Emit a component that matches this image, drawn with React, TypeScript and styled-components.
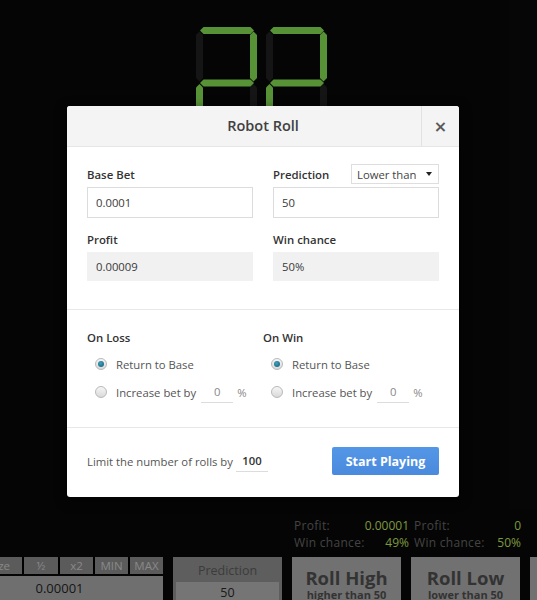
import React from "react";
import styled, { createGlobalStyle } from "styled-components";

const GlobalStyle = createGlobalStyle`
  html, body { margin: 0; padding: 0; background: #060606; }
  body { font-family: "Open Sans", "Noto Sans", Arial, sans-serif; }
  * { box-sizing: border-box; }
`;

const Page = styled.div`
  position: relative;
  width: 537px;
  height: 600px;
  overflow: hidden;
  background: #080808;
`;

const Scene = styled.div`
  display: flex;
  flex-direction: column;
  height: 100%;
`;

const DigitArea = styled.div`
  padding: 21px 0 0 193px;
  height: 140px;
`;

const Spacer = styled.div`
  flex: 1;
`;

const StatsRow = styled.div`
  display: flex;
  gap: 13px;
  padding-left: 294px;
  margin-bottom: 6px;
`;

const StatBlock = styled.div`
  width: 107px;
  flex-shrink: 0;
  display: grid;
  grid-template-columns: auto auto;
  justify-content: space-between;
  font-size: 12px;
  letter-spacing: 0.3px;
  line-height: 17px;
  white-space: nowrap;
`;

const StatLabel = styled.span`
  color: #616161;
`;

const StatValue = styled.span`
  color: #b3d75c;
  text-align: right;
  letter-spacing: 0;
`;

const BottomBar = styled.div`
  display: flex;
  gap: 10px;
  height: 43px;
  margin-left: -44px;
`;

const BetGroup = styled.div`
  width: 207px;
  flex-shrink: 0;
  display: flex;
  flex-direction: column;
  gap: 2px;
`;

const BtnRow = styled.div`
  display: flex;
  gap: 2px;
  height: 23px;
  background: #000;
`;

const GroupBtn = styled.div<{ $w: number; $right?: boolean }>`
  width: ${(p) => p.$w}px;
  flex-shrink: 0;
  background: #838383;
  color: #c3c3c3;
  font-size: 11.5px;
  display: flex;
  align-items: center;
  justify-content: ${(p) => (p.$right ? "flex-end" : "center")};
  padding-right: ${(p) => (p.$right ? "12px" : "0")};
`;

const BetInput = styled.div`
  flex: 1;
  background: #a0a0a0;
  color: #222;
  font-size: 13px;
  text-align: center;
  line-height: 24px;
`;

const PredBox = styled.div`
  width: 109px;
  flex-shrink: 0;
  background: #878787;
  display: flex;
  flex-direction: column;
  align-items: center;
  padding: 0 3px;
`;

const PredTitle = styled.div`
  color: #565656;
  font-size: 12.5px;
  height: 25px;
  line-height: 27px;
`;

const PredInput = styled.div`
  align-self: stretch;
  flex: 1;
  background: #a8a8a8;
  color: #252525;
  font-size: 12.5px;
  text-align: center;
  line-height: 22px;
`;

const RollBtn = styled.div`
  width: 109px;
  flex-shrink: 0;
  background: #a3a3a3;
  color: #4a4a4a;
  display: flex;
  flex-direction: column;
  align-items: center;
  padding-top: 10px;
  overflow: hidden;
`;

const RollTitle = styled.div`
  font-size: 18.5px;
  font-weight: 700;
  line-height: 21px;
`;

const RollSub = styled.div`
  font-size: 11px;
  font-weight: 700;
  line-height: 14px;
`;

const Backdrop = styled.div`
  position: absolute;
  inset: 0;
  background: rgba(0, 0, 0, 0.3);
  padding: 106px 0 0 67px;
`;

const Modal = styled.div`
  width: 392px;
  background: #fff;
  border-radius: 3px;
  box-shadow: 0 3px 12px rgba(0, 0, 0, 0.6);
  overflow: hidden;
`;

const Header = styled.div`
  display: flex;
  height: 41px;
  background: #f4f4f4;
  border-bottom: 1px solid #e6e6e6;
`;

const Title = styled.div`
  flex: 1;
  text-align: center;
  padding-left: 38px;
  font-size: 14.5px;
  font-weight: 600;
  color: #404040;
  line-height: 40px;
`;

const Close = styled.div`
  width: 38px;
  border-left: 1px solid #e2e2e2;
  display: flex;
  align-items: center;
  justify-content: center;
  color: #5a5a5a;
  font-size: 16px;
  font-weight: 700;
  font-family: "DejaVu Sans", sans-serif;
`;

const Section = styled.div<{ $pt: number; $pb: number; $border?: boolean }>`
  padding: ${(p) => p.$pt}px 20px ${(p) => p.$pb}px;
  border-bottom: ${(p) => (p.$border ? "1px solid #e8e8e8" : "none")};
`;

const Grid = styled.div`
  display: grid;
  grid-template-columns: 166px 166px;
  column-gap: 20px;
  row-gap: 11px;
`;

const Field = styled.div`
  display: flex;
  flex-direction: column;
  gap: 3px;
`;

const LabelRow = styled.div`
  display: flex;
  align-items: center;
  justify-content: space-between;
  height: 20px;
`;

const Label = styled.div`
  font-size: 11.4px;
  font-weight: 600;
  color: #333;
`;

const TextInput = styled.div<{ $readonly?: boolean }>`
  height: ${(p) => (p.$readonly ? "29px" : "31px")};
  border: 1px solid ${(p) => (p.$readonly ? "#f1f1f1" : "#dcdcdc")};
  background: ${(p) => (p.$readonly ? "#f1f1f1" : "#fff")};
  font-size: 11.3px;
  color: #3a3a3a;
  padding-left: 8px;
  display: flex;
  align-items: center;
`;

const Select = styled.div`
  width: 88px;
  height: 20px;
  border: 1px solid #dedede;
  font-size: 11.3px;
  color: #444;
  display: flex;
  align-items: center;
  justify-content: space-between;
  padding: 0 6px 0 5px;
`;

const Caret = styled.span`
  width: 0;
  height: 0;
  border-left: 3.5px solid transparent;
  border-right: 3.5px solid transparent;
  border-top: 4px solid #222;
`;

const Columns = styled.div`
  display: grid;
  grid-template-columns: 176px 176px;
`;

const Group = styled.div`
  display: flex;
  flex-direction: column;
`;

const GroupTitle = styled.div`
  font-size: 11.4px;
  font-weight: 600;
  color: #333;
  height: 16px;
  line-height: 16px;
  margin-bottom: 8px;
`;

const RadioRow = styled.label`
  display: flex;
  align-items: center;
  height: 20px;
  padding-left: 8px;
  font-size: 11.3px;
  color: #555;
  & + & {
    margin-top: 8px;
  }
`;

const Radio = styled.input`
  appearance: none;
  width: 12px;
  height: 12px;
  margin: 0 9px 0 0;
  border-radius: 50%;
  border: 1px solid #b9b9b9;
  background: linear-gradient(#f6f6f6, #d9d9d9);
  display: grid;
  place-items: center;
  &:checked::after {
    content: "";
    width: 6px;
    height: 6px;
    border-radius: 50%;
    background: radial-gradient(circle at 40% 35%, #3fa0c0, #135b73);
  }
`;

const Underline = styled.span<{ $w: number; $bold?: boolean }>`
  display: inline-block;
  width: ${(p) => p.$w}px;
  border-bottom: 1px solid #dcdcdc;
  text-align: center;
  line-height: 20px;
  color: ${(p) => (p.$bold ? "#333" : "#888")};
  font-weight: ${(p) => (p.$bold ? 600 : 400)};
`;

const Pct = styled.span`
  color: #888;
  margin-left: 4px;
`;

const IncLabel = styled.span`
  margin-right: 5px;
`;

const Footer = styled.div`
  display: flex;
  align-items: center;
  justify-content: space-between;
  padding: 19px 20px 22px;
`;

const LimitText = styled.div`
  font-size: 11.3px;
  color: #555;
  display: flex;
  align-items: center;
  gap: 3px;
`;

const StartButton = styled.button`
  width: 107px;
  height: 28px;
  border: none;
  border-radius: 2px;
  background: linear-gradient(#5496e6, #4a8ade);
  color: #fff;
  font-family: inherit;
  font-size: 12.5px;
  font-weight: 700;
  padding: 0;
`;

type Seg = "a" | "b" | "c" | "d" | "e" | "f" | "g";

const segPoints = (s: Seg, ox: number): string => {
  const h = (x1: number, x2: number, yc: number) =>
    `${ox + x1},${yc} ${ox + x1 + 3.5},${yc - 3.5} ${ox + x2 - 3.5},${yc - 3.5} ${ox + x2},${yc} ${ox + x2 - 3.5},${yc + 3.5} ${ox + x1 + 3.5},${yc + 3.5}`;
  const v = (xc: number, y1: number, y2: number) =>
    `${ox + xc},${y1} ${ox + xc + 3.5},${y1 + 3.5} ${ox + xc + 3.5},${y2 - 3.5} ${ox + xc},${y2} ${ox + xc - 3.5},${y2 - 3.5} ${ox + xc - 3.5},${y1 + 3.5}`;
  switch (s) {
    case "a":
      return h(4, 58, 9.5);
    case "b":
      return v(57.5, 10.5, 60.5);
    case "c":
      return v(57.5, 63, 113);
    case "d":
      return h(4, 58, 114.5);
    case "e":
      return v(3.5, 63, 113);
    case "f":
      return v(3.5, 10.5, 60.5);
    default:
      return h(4, 58, 62);
  }
};

const TWO: Seg[] = ["a", "b", "g", "e", "d"];
const ALL: Seg[] = ["a", "b", "c", "d", "e", "f", "g"];

const Digit: React.FC<{ ox: number; lit: Seg[] }> = ({ ox, lit }) => (
  <g>
    {ALL.map((s) => (
      <polygon
        key={s}
        points={segPoints(s, ox)}
        fill={lit.includes(s) ? "#7fd250" : "#1f1f1f"}
      />
    ))}
  </g>
);

export default function App() {
  return (
    <>
      <GlobalStyle />
      <Page>
        <Scene>
          <DigitArea>
            <svg width="140" height="124" viewBox="0 0 140 124">
              <Digit ox={3} lit={TWO} />
              <Digit ox={73} lit={TWO} />
            </svg>
          </DigitArea>
          <Spacer />
          <StatsRow>
            <StatBlock>
              <StatLabel>Profit:</StatLabel>
              <StatValue>0.00001</StatValue>
              <StatLabel>Win chance:</StatLabel>
              <StatValue>49%</StatValue>
            </StatBlock>
            <StatBlock>
              <StatLabel>Profit:</StatLabel>
              <StatValue>0</StatValue>
              <StatLabel>Win chance:</StatLabel>
              <StatValue>50%</StatValue>
            </StatBlock>
          </StatsRow>
          <BottomBar>
            <BetGroup>
              <BtnRow>
                <GroupBtn $w={66} $right>
                  Size
                </GroupBtn>
                <GroupBtn $w={34}>½</GroupBtn>
                <GroupBtn $w={33}>x2</GroupBtn>
                <GroupBtn $w={33}>MIN</GroupBtn>
                <GroupBtn $w={33}>MAX</GroupBtn>
              </BtnRow>
              <BetInput>0.00001</BetInput>
            </BetGroup>
            <PredBox>
              <PredTitle>Prediction</PredTitle>
              <PredInput>50</PredInput>
            </PredBox>
            <RollBtn>
              <RollTitle>Roll High</RollTitle>
              <RollSub>higher than 50</RollSub>
            </RollBtn>
            <RollBtn>
              <RollTitle>Roll Low</RollTitle>
              <RollSub>lower than 50</RollSub>
            </RollBtn>
            <RollBtn />
          </BottomBar>
        </Scene>

        <Backdrop>
          <Modal>
            <Header>
              <Title>Robot Roll</Title>
              <Close>×</Close>
            </Header>

            <Section $pt={17} $pb={28} $border>
              <Grid>
                <Field>
                  <LabelRow>
                    <Label>Base Bet</Label>
                  </LabelRow>
                  <TextInput>0.0001</TextInput>
                </Field>
                <Field>
                  <LabelRow>
                    <Label>Prediction</Label>
                    <Select>
                      <span>Lower than</span>
                      <Caret />
                    </Select>
                  </LabelRow>
                  <TextInput>50</TextInput>
                </Field>
                <Field>
                  <LabelRow>
                    <Label>Profit</Label>
                  </LabelRow>
                  <TextInput $readonly>0.00009</TextInput>
                </Field>
                <Field>
                  <LabelRow>
                    <Label>Win chance</Label>
                  </LabelRow>
                  <TextInput $readonly>50%</TextInput>
                </Field>
              </Grid>
            </Section>

            <Section $pt={20} $pb={25} $border>
              <Columns>
                <Group>
                  <GroupTitle>On Loss</GroupTitle>
                  <RadioRow>
                    <Radio type="radio" name="loss" defaultChecked />
                    Return to Base
                  </RadioRow>
                  <RadioRow>
                    <Radio type="radio" name="loss" />
                    <IncLabel>Increase bet by</IncLabel>
                    <Underline $w={32}>0</Underline>
                    <Pct>%</Pct>
                  </RadioRow>
                </Group>
                <Group>
                  <GroupTitle>On Win</GroupTitle>
                  <RadioRow>
                    <Radio type="radio" name="win" defaultChecked />
                    Return to Base
                  </RadioRow>
                  <RadioRow>
                    <Radio type="radio" name="win" />
                    <IncLabel>Increase bet by</IncLabel>
                    <Underline $w={32}>0</Underline>
                    <Pct>%</Pct>
                  </RadioRow>
                </Group>
              </Columns>
            </Section>

            <Footer>
              <LimitText>
                Limit the number of rolls by
                <Underline $w={32} $bold>
                  100
                </Underline>
              </LimitText>
              <StartButton>Start Playing</StartButton>
            </Footer>
          </Modal>
        </Backdrop>
      </Page>
    </>
  );
}
